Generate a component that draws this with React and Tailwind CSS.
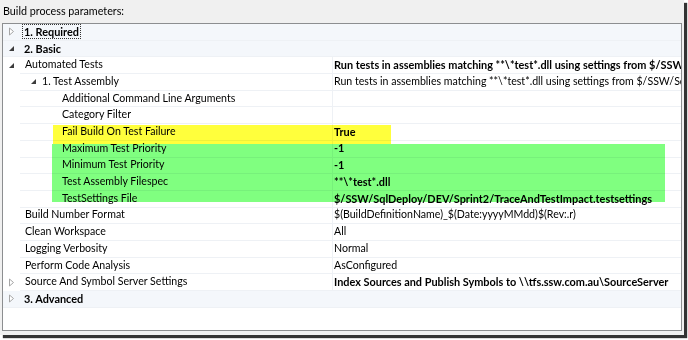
import React from 'react'

const rows = [
  { type: 'cat', label: '1. Required', open: false, focus: true },
  { type: 'cat', label: '2. Basic', open: true },
  { type: 'prop', label: 'Automated Tests', indent: 0, glyph: 'open', value: 'Run tests in assemblies matching **\\*test*.dll using settings from $/SSW/SqlDeploy/DEV/Sprint2/TraceAndTestImpact.testsettings', bold: true },
  { type: 'prop', label: '1. Test Assembly', indent: 1, glyph: 'open', value: 'Run tests in assemblies matching **\\*test*.dll using settings from $/SSW/SqlDeploy/DEV/Sprint2/TraceAndTestImpact.testsettings' },
  { type: 'prop', label: 'Additional Command Line Arguments', indent: 2, value: '' },
  { type: 'prop', label: 'Category Filter', indent: 2, value: '' },
  { type: 'prop', label: 'Fail Build On Test Failure', indent: 2, value: 'True', bold: true },
  { type: 'prop', label: 'Maximum Test Priority', indent: 2, value: '-1', bold: true },
  { type: 'prop', label: 'Minimum Test Priority', indent: 2, value: '-1', bold: true },
  { type: 'prop', label: 'Test Assembly Filespec', indent: 2, value: '**\\*test*.dll', bold: true },
  { type: 'prop', label: 'TestSettings File', indent: 2, value: '$/SSW/SqlDeploy/DEV/Sprint2/TraceAndTestImpact.testsettings', bold: true },
  { type: 'prop', label: 'Build Number Format', indent: 0, value: '$(BuildDefinitionName)_$(Date:yyyyMMdd)$(Rev:.r)' },
  { type: 'prop', label: 'Clean Workspace', indent: 0, value: 'All' },
  { type: 'prop', label: 'Logging Verbosity', indent: 0, value: 'Normal' },
  { type: 'prop', label: 'Perform Code Analysis', indent: 0, value: 'AsConfigured' },
  { type: 'prop', label: 'Source And Symbol Server Settings', indent: 0, glyph: 'closed', value: 'Index Sources and Publish Symbols to \\\\tfs.ssw.com.au\\SourceServer', bold: true },
  { type: 'cat', label: '3. Advanced', open: false },
]

function Closed() {
  return (
    <svg width="7" height="9" viewBox="0 0 7 9">
      <path d="M1.5 1 L5.5 4.5 L1.5 8 Z" fill="#fff" stroke="#a6a6a6" strokeWidth="1" />
    </svg>
  )
}

function Open() {
  return (
    <svg width="7" height="7" viewBox="0 0 7 7">
      <path d="M6 1 L6 6 L1 6 Z" fill="#3c3c3c" />
    </svg>
  )
}

const pad = ['pl-[5px]', 'pl-[22px]', 'pl-[42px]']

function Row({ row }) {
  if (row.type === 'cat') {
    return (
      <div className="flex h-[16.7px] items-center border-b border-[#eef1f5] bg-[#f4f7fb]">
        <div className="flex w-[17px] shrink-0 items-center justify-center">
          {row.open ? <Open /> : <Closed />}
        </div>
        <span
          className={
            'ml-[2px] px-[1px] text-[10.9px] font-bold leading-[13px] ' +
            (row.focus ? 'border border-dotted border-[#333]' : 'border border-transparent')
          }
        >
          {row.label}
        </span>
      </div>
    )
  }
  return (
    <div className="flex h-[16.7px] items-center">
      <div className="flex h-full w-[17px] shrink-0 items-center justify-center">
        {row.indent === 0 && row.glyph === 'open' && <Open />}
        {row.indent === 0 && row.glyph === 'closed' && <Closed />}
      </div>
      <div
        className={
          'flex h-full w-[313px] shrink-0 items-center whitespace-nowrap border-b border-r border-[#eef1f5] text-[10.6px] ' +
          pad[row.indent]
        }
      >
        {row.indent === 1 && (
          <span className="-ml-[12px] mr-[5px] flex w-[7px]">
            <Open />
          </span>
        )}
        {row.label}
      </div>
      <div
        className={
          'flex h-full flex-1 items-center overflow-hidden whitespace-nowrap border-b border-[#eef1f5] pl-[1px] ' +
          (row.bold ? 'text-[10.9px] font-bold' : 'text-[10.6px]')
        }
      >
        {row.value}
      </div>
    </div>
  )
}

export default function App() {
  return (
    <div className="relative h-[340px] w-[688px] overflow-hidden bg-white font-['Lato',sans-serif] text-black">
      <div className="flex h-[335px] w-[684px] flex-col bg-[#f0f0f0] shadow-[3px_3px_1px_rgba(0,0,0,0.8)]">
        {/* Header */}
        <div className="flex h-[23px] items-center pl-[3px] text-[10.75px]">Build process parameters:</div>

        {/* Property grid */}
        <div className="ml-[2px] mr-[2px] h-[308px] overflow-hidden border border-[#8c8e90] bg-white">
          {rows.map((row) => (
            <Row key={row.label} row={row} />
          ))}
        </div>
      </div>

      {/* Highlighter marks */}
      <div className="pointer-events-none absolute left-[53px] top-[125px] h-[19px] w-[338px] bg-[#ffff3c] mix-blend-multiply" />
      <div className="pointer-events-none absolute left-[52px] top-[144px] h-[58px] w-[613px] bg-[#80ff80] mix-blend-multiply" />
    </div>
  )
}
